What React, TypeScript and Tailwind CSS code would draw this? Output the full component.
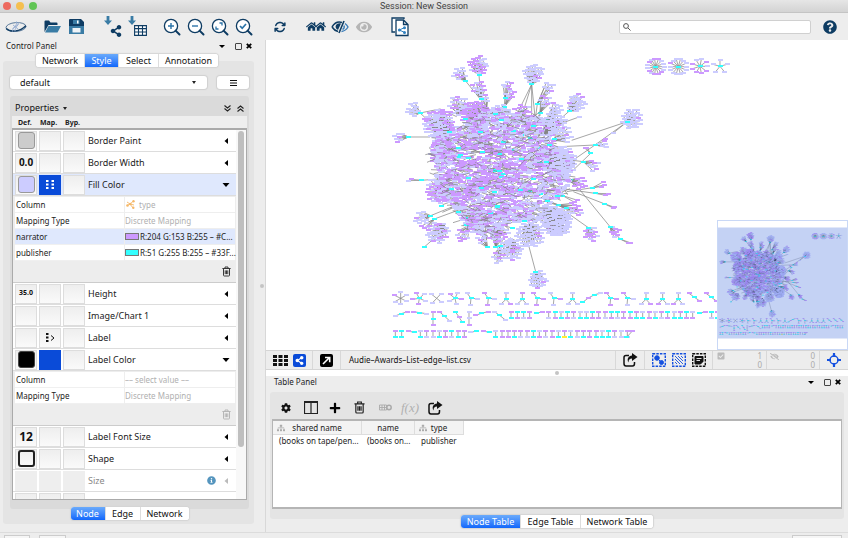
import { Fragment, type ReactNode } from "react";
import {
  FaShareAlt, FaQuestionCircle, FaHome, FaEye, FaCog, FaPlus,
  FaSitemap, FaInfoCircle, FaCheckSquare, FaEyeSlash,
} from "react-icons/fa";
import { FaArrowsRotate } from "react-icons/fa6";

/* ---------- network drawing ---------- */

type Kind = "L" | "P" | "C" | "Y";
type Layer = { edges: string; L: string; P: string; C: string; Y: string };

const COLORS: Record<Kind, string> = { L: "#ccccff", P: "#cc99ff", C: "#33ffff", Y: "#ffee33" };

function buildNetwork(): Layer[] {
  let seed = 20177;
  const rnd = () => {
    seed = (seed + 0x6d2b79f5) | 0;
    let t = Math.imul(seed ^ (seed >>> 15), 1 | seed);
    t = (t + Math.imul(t ^ (t >>> 7), 61 | t)) ^ t;
    return ((t ^ (t >>> 14)) >>> 0) / 4294967296;
  };
  const layers: Layer[] = [];
  let cur: Layer;
  const newLayer = () => {
    cur = { edges: "", L: "", P: "", C: "", Y: "" };
    layers.push(cur);
  };
  const snap = (v: number) => Math.round(v / 3) * 3;
  const node = (x: number, y: number, k: Kind) => {
    cur[k] += `M${snap(x - 7)} ${snap(y - 3)}h15v6h-15z`;
  };
  const edge = (x1: number, y1: number, x2: number, y2: number) => {
    cur.edges += `M${Math.round(x1)} ${Math.round(y1)}L${Math.round(x2)} ${Math.round(y2)}`;
  };
  const pick = (p: number): Kind => (rnd() < p ? "P" : "L");
  // bubble of leaves around a hub
  const disc = (cx: number, cy: number, r: number, p: number, hx = cx, hy = cy, density = 44) => {
    const n = Math.max(2, Math.round((r * r) / density));
    for (let i = 0; i < n; i++) {
      const a = i * 2.39996;
      const d = r * Math.sqrt((i + 0.5) / n);
      const x = cx + Math.cos(a) * d;
      const y = cy + Math.sin(a) * d;
      edge(hx, hy, x, y);
      node(x, y, pick(p));
    }
  };
  const fan = (hx: number, hy: number, cx: number, cy: number, r: number, p: number, stems: number[][] = []) => {
    disc(cx, cy, r, p, hx, hy, r > 24 ? 30 : 36);
    stems.forEach(([x, y]) => edge(hx, hy, x, y));
    node(hx, hy, "C");
  };

  newLayer();
  fan(297, 90, 295, 60, 28, 0.55, [[303, 160]]);
  fan(256, 107, 238, 86, 20, 0.1, [[303, 165]]);
  fan(303, 162, 297, 130, 22, 0.3, [[320, 220]]);
  fan(320, 188, 316, 160, 14, 0.3, [[330, 230]]);
  fan(375, 160, 382, 122, 15, 0.3, [[375, 200]]);
  fan(373, 186, 390, 148, 16, 0.8, [[370, 230]]);
  fan(455, 118, 460, 85, 29, 0.12, [[412, 205], [428, 205], [455, 240], [465, 215]]);
  fan(472, 176, 507, 128, 17, 0.2, [[465, 230]]);
  fan(480, 204, 495, 168, 18, 0.5, [[460, 250]]);
  fan(506, 222, 528, 190, 18, 0.2, [[490, 260]]);
  fan(568, 198, 590, 174, 27, 0.3, [[515, 245]]);
  fan(742, 230, 756, 222, 31, 0.04, [[575, 286], [645, 300], [700, 264]]);
  node(700, 264, "L");
  node(675, 282, "P");
  fan(120, 204, 98, 193, 21, 0.05, [[160, 240], [180, 192]]);
  edge(180, 192, 230, 215);
  fan(86, 276, 55, 276, 16, 0.7, [[150, 276]]);
  fan(124, 406, 90, 403, 7, 0.3, [[175, 402]]);
  fan(152, 512, 122, 520, 20, 0.1, [[230, 480]]);
  fan(163, 522, 138, 545, 14, 0.5, [[250, 490]]);
  fan(322, 607, 305, 580, 16, 0.3, [[315, 540]]);
  fan(347, 607, 350, 575, 18, 0.5, [[350, 540]]);
  fan(362, 602, 354, 638, 17, 0.4, [[375, 560]]);
  fan(467, 680, 474, 705, 27, 0.03, [[443, 590]]);
  fan(645, 300, 672, 298, 14, 0.2, [[540, 305], [580, 345]]);
  fan(632, 325, 618, 308, 4, 0.8, [[575, 380]]);
  fan(610, 350, 642, 362, 17, 0.3, [[578, 346]]);
  fan(638, 428, 668, 420, 10, 0.8, [[560, 440]]);
  fan(645, 445, 682, 446, 8, 0.8, [[540, 430]]);
  fan(672, 476, 702, 487, 3, 0.9, [[580, 440]]);
  fan(690, 545, 706, 562, 17, 0.7, [[600, 435]]);
  fan(720, 582, 748, 593, 3, 0.9, [[690, 545]]);
  fan(625, 548, 634, 568, 22, 0.6, [[550, 495]]);
  fan(572, 404, 600, 416, 20, 0.7, [[540, 380]]);
  fan(548, 452, 588, 466, 9, 0.5, [[500, 440]]);
  fan(534, 480, 582, 490, 18, 0.6, [[490, 460]]);
  fan(558, 490, 600, 504, 10, 0.5, [[500, 470]]);
  edge(133, 606, 165, 578);
  node(133, 606, "C");
  edge(530, 240, 600, 215);
  node(598, 216, "L");
  disc(245, 572, 20, 0.6, 270, 540);
  disc(172, 562, 33, 0.25, 192, 540, 30);
  disc(392, 614, 34, 0.15, 392, 580, 30);
  disc(450, 568, 42, 0.05, 450, 540, 34);
  disc(530, 530, 44, 0.03, 505, 500, 26);

  // dense core: wobbling outline, more narrators towards the middle
  for (let l = 0; l < 8; l++) {
    newLayer();
    if (l === 0) {
      disc(176, 238, 46, 0.4, 205, 260, 26);
      disc(236, 182, 32, 0.25, 240, 210);
      disc(190, 322, 42, 0.4, 190, 322, 30);
      disc(180, 435, 42, 0.45, 180, 435, 30);
      disc(540, 350, 48, 0.15, 500, 350, 26);
      disc(522, 236, 36, 0.1, 495, 265, 26);
      disc(555, 270, 24, 0.1, 520, 285);
      disc(425, 205, 30, 0.7);
      disc(360, 200, 24, 0.3);
      disc(285, 210, 42, 0.75, 285, 210, 26);
      disc(290, 530, 42, 0.4);
      disc(355, 560, 32, 0.6);
    }
    for (let i = 0; i < 260; i++) {
      const a = rnd() * Math.PI * 2;
      const t = Math.sqrt(rnd());
      const wob = 1 + 0.06 * Math.sin(a * 7 + 1) + 0.05 * Math.sin(a * 4);
      const x = 360 + Math.cos(a) * t * 200 * wob;
      const y = 374 + Math.sin(a) * t * 180 * wob;
      if (i % 2 === 0) {
        edge(x, y, x + (rnd() - 0.5) * 80, y + (rnd() - 0.5) * 40);
      }
      const q = rnd();
      node(x, y, q < 0.012 ? "C" : pick(0.7 - 0.4 * t * t + (x < 330 ? 0.03 : -0.06)));
    }
  }

  // bubbles and publishers that lie over the core
  newLayer();
  disc(522, 236, 26, 0.08, 495, 265, 24);
  disc(530, 532, 40, 0.03, 505, 500, 26);
  disc(545, 352, 36, 0.1, 505, 352, 26);
  disc(176, 238, 36, 0.3, 205, 260, 26);
  [[257, 222], [300, 261], [240, 330], [308, 321], [265, 340], [208, 262], [215, 432], [234, 502], [185, 484],
   [352, 482], [352, 487], [358, 377], [425, 341], [498, 352], [522, 282], [508, 300], [460, 243], [433, 528],
   [398, 548], [365, 225], [346, 206], [502, 468], [460, 402], [305, 430], [420, 434]].forEach(([x, y]) => node(x, y, "C"));

  // small stars at the top right
  const star = (x: number, y: number, r: number, n: number, p: number, hub: boolean, rot = 0) => {
    for (let i = 0; i < n; i++) {
      const a = rot + (i / n) * Math.PI * 2;
      const nx = x + Math.cos(a) * r;
      const ny = y + Math.sin(a) * r * 0.92;
      edge(x, y, nx, ny);
      node(nx, ny, pick(p));
    }
    if (hub) node(x, y, "C");
  };
  star(827, 65, 25, 15, 0.2, true);
  star(895, 65, 25, 14, 0.15, true);
  star(960, 64, 23, 9, 0.6, true);
  star(1020, 64, 22, 5, 0, true, -1.57);

  // loose components under the core
  const y1 = 760;
  star(62, y1, 20, 6, 0.15, false, 0.5);
  star(118, y1, 20, 5, 0.3, true, -0.8);
  star(170, y1, 20, 4, 0.2, false, 0.7);
  star(225, y1, 20, 5, 0.2, true, 0.1);
  [273, 325, 472, 522, 692, 743].forEach((x) => {
    [[-12, -16], [18, 1], [-2, 19]].forEach(([dx, dy]) => {
      edge(x, y1, x + dx, y1 + dy);
      node(x + dx, y1 + dy, pick(0.4));
    });
    node(x, y1, "C");
  });
  [378, 427, 578, 798, 848, 895].forEach((x) => {
    [[0, -17], [-14, 16], [13, 17]].forEach(([dx, dy]) => {
      edge(x, y1 + 3, x + dx, y1 + dy);
      node(x + dx, y1 + dy, pick(0.4));
    });
    node(x, y1 + 3, "C");
  });
  const chain = (pts: [number, number, Kind][]) => {
    pts.forEach(([x, y], i) => {
      if (i) edge(pts[i - 1][0], pts[i - 1][1] + 705, x, y + 705);
    });
    pts.forEach(([x, y, k]) => node(x, y + 705, k));
  };
  chain([[608, 67, "C"], [625, 54, "P"], [644, 44, "C"], [661, 40, "L"]]);
  chain([[927, 40, "P"], [942, 51, "C"], [958, 62, "P"]]);
  chain([[978, 40, "P"], [993, 51, "C"], [1008, 62, "P"]]);
  chain([[1028, 40, "P"], [1043, 51, "C"], [1058, 62, "P"]]);
  chain([[45, 108, "L"], [64, 101, "C"], [83, 95, "P"]]);
  chain([[100, 95, "P"], [119, 98, "C"], [139, 101, "L"]]);
  chain([[159, 95, "P"], [159, 116, "C"], [159, 135, "P"]]);
  chain([[178, 95, "P"], [193, 108, "C"], [208, 122, "L"]]);
  chain([[226, 95, "C"], [237, 111, "P"], [247, 127, "C"]]);
  chain([[267, 95, "L"], [267, 115, "L"], [267, 135, "P"]]);
  chain([[287, 106, "P"], [304, 100, "C"], [324, 95, "P"]]);
  chain([[343, 95, "L"], [359, 106, "C"], [375, 119, "L"]]);
  const other = (): Kind => (rnd() < 0.62 ? "C" : rnd() < 0.5 ? "P" : "L");
  for (let i = 0; i < 36; i++) {
    const x = 393 + i * 18.8;
    if (i === 4 || i === 30) {
      chain([[x + 2, 100, "C"], [x + 18, 95, "P"]]);
    } else if (i !== 5 && i !== 31) {
      const cyanTop = rnd() < 0.3;
      chain([[x, 95, cyanTop ? "C" : pick(0.5)], [x, 115, cyanTop ? pick(0.5) : other()]]);
    }
  }
  for (let i = 0; i < 38; i++) {
    const x = 46 + i * 18.8;
    if (i === 2 || i === 14) {
      chain([[x, 153, "P"], [x + 18, 157, "C"]]);
    } else if (i === 12) {
      chain([[x, 157, "L"], [x + 18, 153, "C"]]);
    } else if (i !== 3 && i !== 13 && i !== 15) {
      chain([[x, 153, rnd() < 0.12 ? "C" : pick(0.75)], [x, 172, i === 27 ? "Y" : other()]]);
    }
  }
  chain([[740, 172, "C"], [757, 153, "P"]]);
  return layers;
}

const NETWORK = buildNetwork();

function NetworkGraph({ edge }: { edge: string }) {
  return (
    <g transform="translate(380 45) scale(.333333)">
      {NETWORK.map((l, i) => (
        <Fragment key={i}>
          <path d={l.edges} stroke={edge} strokeWidth="2.200" fill="none" />
          <path d={l.L} fill={COLORS.L} />
          <path d={l.P} fill={COLORS.P} />
          <path d={l.C} fill={COLORS.C} />
          <path d={l.Y} fill={COLORS.Y} />
        </Fragment>
      ))}
    </g>
  );
}

/* ---------- icons ---------- */

function LogoIcon() {
  return (
    <svg viewBox="0 0 24 16" className="h-4 w-6" fill="none">
      <ellipse cx="12" cy="8" rx="10" ry="4.400" stroke="#4d6f93" strokeWidth=".9" transform="rotate(-4 12 8)" />
      <path d="M2.200 9.500C6 13.500 16 13 21.800 6.800" stroke="#133f66" strokeWidth="1.500" />
      <path d="M8.500 12.500c-1-3 5-5 4-10M14 3c1.500 3-3.500 5-3 9.500M9 6l5 4M8.500 9.500l6-4" stroke="#94acd0" strokeWidth=".9" />
    </svg>
  );
}

function FolderIcon() {
  return (
    <svg viewBox="0 0 17 13" className="h-[13px] w-[17px]">
      <path d="M.5 12V1.500Q.5.500 1.500.500H5l1.500 2h6q1 0 1 1V5H4.500z" fill="#0e3c63" />
      <path d="M4.500 6H17l-3.500 6.500H1z" fill="#3a7ca5" />
    </svg>
  );
}

function SaveIcon() {
  return (
    <svg viewBox="0 0 15 15" className="size-[15px]">
      <path d="M1 0h11l3 3v11q0 1-1 1H1q-1 0-1-1V1Q0 0 1 0z" fill="#0e3c63" />
      <path d="M0 7h15v7q0 1-1 1H1q-1 0-1-1z" fill="#3a7ca5" />
      <path d="M3.500 9h8v4.500h-8z" fill="#eef3f7" />
      <path d="M4 1h6.500v4H4z" fill="#3a7ca5" />
      <path d="M8 1.500h1.500v3H8z" fill="#fff" />
    </svg>
  );
}

function TableGridIcon() {
  return (
    <svg viewBox="0 0 13 11" className="mt-2 ml-2 h-[11px] w-[13px] shrink-0" fill="#fff" stroke="#0e3c63" strokeWidth="1.100">
      <path d="M.6.600h11.800v9.800H.6z" />
      <path d="M.6 3.600h11.800M.6 7h11.800M4.500.600v9.800M8.500.600v9.800" />
    </svg>
  );
}

function ZoomIcon({ children }: { children: ReactNode }) {
  return (
    <svg viewBox="0 0 18 18" className="size-[18px]" fill="none" stroke="#0e3c63">
      <circle cx="8" cy="8" r="6.600" strokeWidth="1.300" fill="#fff" />
      <path d="M12.600 12.600L16.500 16.500" strokeWidth="2" strokeLinecap="round" />
      {children}
    </svg>
  );
}

function DownArrow() {
  return (
    <svg viewBox="0 0 8 9" className="absolute top-px left-1 h-[9px] w-2" fill="#3a7ca5">
      <path d="M2.600 0h2.800v4.500H8L4 9 0 4.500h2.600z" />
    </svg>
  );
}

function SplitEye() {
  return (
    <svg viewBox="0 0 18 14" className="h-3.5 w-[18px]" fill="none">
      <path d="M1 7C4 2 8 1.500 11 2.500M1 7c2 3 4 4 6 4.500" stroke="#0e3c63" strokeWidth="1.500" />
      <path d="M4.500 7A4 4 0 0 1 10 3.500L7 10A4 4 0 0 1 4.500 7z" fill="#0e3c63" />
      <path d="M13 1L8 13" stroke="#0e3c63" strokeWidth="1.600" />
      <path d="M14 3.500C16 5 17 7 17 7s-2.500 4-6.500 4.500M13 5.500c.6 2-.4 3.500-1.500 4" stroke="#3a7cb8" strokeWidth="1.400" />
    </svg>
  );
}

function CopyNetworkIcon() {
  return (
    <svg viewBox="0 0 18 20" className="h-5 w-[18px]" fill="#fff" stroke="#0e3c63" strokeWidth="1.300">
      <path d="M13 2V1H1v14h3" />
      <path d="M5 3h7.500L17 7.500V18.500H5zM12.500 3v4.500H17" />
      <path d="M13.500 10.500L8.500 13l5 2.500" stroke="#2f80c0" strokeWidth="1" fill="none" />
      <g fill="#2f80c0" stroke="none"><circle cx="8.500" cy="13" r="1.600" /><circle cx="13.500" cy="10.700" r="1.500" /><circle cx="13.500" cy="15.500" r="1.500" /></g>
    </svg>
  );
}

function TrashIcon({ className }: { className: string }) {
  return (
    <svg viewBox="0 0 12 14" className={className} fill="none" stroke="currentColor" strokeWidth="1.300">
      <path d="M.5 3h11M4 3V1h4v2M2 3v9q0 1 1 1h6q1 0 1-1V3M4.300 5.500v5M6 5.500v5M7.700 5.500v5" />
    </svg>
  );
}

function ExportIcon() {
  return (
    <svg viewBox="0 0 15 14" className="h-3.5 w-[15px]" fill="none" stroke="#111" strokeWidth="1.500">
      <path d="M6 2.500H3Q1 2.500 1 4.500v6Q1 13 3 13h6.500q2 0 2-2.500V9" />
      <path d="M9 0l5.500 4L9 8V5.500C6.500 5.500 5.500 7 5.500 9.500 3.500 6 5.500 2.700 9 2.500z" fill="#111" stroke="none" />
    </svg>
  );
}

function GridIcon() {
  return (
    <svg viewBox="0 0 15 11" className="h-[11px] w-[15px]" fill="#111">
      <path d="M0 0h4v3H0zM5.500 0h4v3h-4zM11 0h4v3h-4zM0 4h4v3H0zM5.500 4h4v3h-4zM11 4h4v3h-4zM0 8h4v3H0zM5.500 8h4v3h-4zM11 8h4v3h-4z" />
    </svg>
  );
}

function DashedIcon({ color, children }: { color: string; children: ReactNode }) {
  return (
    <svg viewBox="0 0 14 14" className="size-3.5" fill="none" stroke={color}>
      <path d="M.7.700h12.600v12.600H.7z" strokeWidth="1.400" strokeDasharray="2.500 1.100" />
      {children}
    </svg>
  );
}

function Chevrons({ up }: { up?: boolean }) {
  return (
    <svg viewBox="0 0 7 7" className="size-[7px]" fill="none" stroke="#222" strokeWidth="1.100">
      <path d={up ? "M.5 3.500l3-2.500 3 2.500M.5 6.500l3-2.500 3 2.500" : "M.5.500l3 2.500 3-2.500M.5 3.500l3 2.500 3-2.500"} />
    </svg>
  );
}

/* ---------- shared parts ---------- */

function ToolButton({ label, children }: { label: string; children: ReactNode }) {
  return (
    <button aria-label={label} className="relative flex h-6 w-6 items-center justify-center text-[#0e3c63]">
      {children}
    </button>
  );
}

function PanelTitle({ title }: { title: string }) {
  return (
    <div className="flex h-3 items-center text-[8px] leading-3 text-[#222]">
      <h2 className="flex-1">{title}</h2>
      <button aria-label="Panel menu" className="mr-2.5 border-x-[3px] border-t-[3px] border-x-transparent border-t-black" />
      <button aria-label="Float panel" className="mr-1 size-[7px] rounded-[1px] border border-[#444]" />
      <button aria-label="Close panel">
        <svg viewBox="0 0 6 6" className="size-1.5"><path d="M.8.800l4.400 4.400M5.200.800L.8 5.200" stroke="#000" strokeWidth="1.800" /></svg>
      </button>
    </div>
  );
}

function Tabs({ items, active }: { items: [string, string][]; active: string }) {
  return (
    <div role="tablist" className="flex h-[13px] divide-x divide-[#ddd] overflow-hidden rounded-[3px] bg-white text-[9px] leading-[13px] text-[#111] shadow-[0_0_1px_1px_#d4d4d4]">
      {items.map(([name, width]) => (
        <button
          key={name}
          role="tab"
          aria-selected={name === active}
          className={`${width} text-center whitespace-nowrap ${name === active ? "bg-linear-to-b from-[#6aaafb] to-[#0f66fb] text-white" : "bg-white"}`}
        >
          {name}
        </button>
      ))}
    </div>
  );
}

/* ---------- control panel ---------- */

type Row = {
  name: string;
  def?: ReactNode;
  map?: ReactNode;
  mapOn?: boolean;
  open?: boolean;
  selected?: boolean;
  disabled?: boolean;
};

function Swatch({ className }: { className: string }) {
  return <span className={`size-[17px] rounded-[3px] border ${className}`} />;
}

function Cell({ on, disabled, label, children }: { on?: boolean; disabled?: boolean; label: string; children?: ReactNode }) {
  const look = on ? "border-[#0a4bd8] bg-[#0a4bd8]" : disabled ? "border-[#eee] bg-[#eee]" : "border-[#ddd] bg-linear-to-b from-[#eee] to-[#fafafa]";
  return (
    <button aria-label={label} className={`flex h-5 w-[22px] shrink-0 items-center justify-center border font-bold text-[#111] ${look}`}>
      {children}
    </button>
  );
}

function PropertyRow({ row }: { row: Row }) {
  return (
    <div className={`flex h-[22px] shrink-0 items-center gap-[2px] border-b border-[#ddd] pl-[2px] ${row.selected ? "bg-[#dfe8fd]" : "bg-white"}`}>
      <Cell label={`${row.name} default`} disabled={row.disabled}>{row.def}</Cell>
      <Cell label={`${row.name} mapping`} on={row.mapOn} disabled={row.disabled}>{row.map}</Cell>
      <Cell label={`${row.name} bypass`} disabled={row.disabled} />
      <span className={`flex-1 pl-px text-[9px] ${row.disabled ? "text-[#888]" : "text-[#222]"}`}>{row.name}</span>
      {row.disabled && <FaInfoCircle className="mr-1 size-[9px] text-[#5595be]" />}
      <button aria-label={`Toggle ${row.name}`} className="mr-1.5 flex w-2 justify-center">
        <svg viewBox="0 0 8 6" className="h-1.5 w-2" fill={row.disabled ? "#bbb" : "#000"}>
          <path d={row.open ? "M.5 1h7L4 5z" : "M6 0v6L2.500 3z"} />
        </svg>
      </button>
    </div>
  );
}

type MapLine = { name: string; value: ReactNode; muted?: boolean; selected?: boolean };

function MappingEditor({ lines, trash }: { lines: MapLine[]; trash: string }) {
  return (
    <div className="shrink-0 border-b border-[#ccc] bg-[#ededed] pt-px pl-[2px]">
      <table className="w-[220px] table-fixed border-separate border-spacing-0 text-[8px] leading-[14px] text-[#222]">
        <tbody>
          {lines.map((l) => (
            <tr key={l.name} className={l.selected ? "bg-[#dfe8fd]" : "bg-white"}>
              <th scope="row" className="h-4 w-[109px] border-b border-[#f0f0f0] p-0 pl-px text-left font-normal">{l.name}</th>
              <td className={`h-4 border-b border-l border-[#eee] p-0 whitespace-nowrap ${l.muted ? "text-[#b0b0b0]" : ""}`}>{l.value}</td>
            </tr>
          ))}
        </tbody>
      </table>
      <div className="flex h-[21px] items-center justify-end pr-[5px]">
        <button aria-label="Remove mapping" className={trash}><TrashIcon className="h-[11px] w-[9px]" /></button>
      </div>
    </div>
  );
}

function ColorValue({ swatch, text }: { swatch: string; text: string }) {
  return (
    <span className="flex items-center gap-px">
      <span className={`h-[7px] w-3.5 shrink-0 border border-[#777] ${swatch}`} />
      {text}
    </span>
  );
}

const fillLines: MapLine[] = [
  {
    name: "Column",
    muted: true,
    value: (
      <span className="flex items-center gap-1 pl-px">
        <svg viewBox="0 0 9 9" className="size-[9px]" fill="none" stroke="#f5b869" strokeWidth=".9">
          <path d="M1 5.500L4 4 7.500 1M4 4l4 1M4 4l3 4M1 2l3 2" />
          <g fill="#f5b869" stroke="none"><circle cx="1.500" cy="5.500" r="1.300" /><circle cx="4.300" cy="4" r="1.300" /><circle cx="7.500" cy="1.300" r="1.200" /><circle cx="7.300" cy="7.700" r="1.200" /></g>
        </svg>
        type
      </span>
    ),
  },
  { name: "Mapping Type", muted: true, value: "Discrete Mapping" },
  { name: "narrator", selected: true, value: <ColorValue swatch="bg-[#cc99ff]" text="R:204 G:153 B:255 – #C..." /> },
  { name: "publisher", value: <ColorValue swatch="bg-[#33ffff]" text="R:51 G:255 B:255 – #33F..." /> },
];

const labelLines: MapLine[] = [
  { name: "Column", muted: true, value: "–– select value ––" },
  { name: "Mapping Type", muted: true, value: "Discrete Mapping" },
];

const dots = (
  <svg viewBox="0 0 8 9" className="h-[9px] w-2" fill="#fff">
    <path d="M0 0h2.500v2H0zM0 3.500h2.500v2H0zM0 7h2.500v2H0zM5.500 0H8v2H5.500zM5.500 3.500H8v2H5.500zM5.500 7H8v2H5.500z" />
  </svg>
);

const passthrough = (
  <svg viewBox="0 0 9 9" className="size-[9px]" fill="#111">
    <path d="M0 0h2.500v2H0zM0 3.500h2.500v2H0zM0 7h2.500v2H0z" />
    <path d="M5 2.500L8 5 5 7.500" fill="none" stroke="#111" />
  </svg>
);

function ControlPanel() {
  return (
    <aside className="flex w-[254px] shrink-0 flex-col pb-2">
      <div className="pr-0.5 pl-1.5"><PanelTitle title="Control Panel" /></div>
      <div className="relative mt-[2px] flex justify-center pb-2">
        <Tabs active="Style" items={[["Network", "w-[49px]"], ["Style", "w-[34px]"], ["Select", "w-10"], ["Annotation", "w-[59px]"]]} />
      </div>
      <div className="-mt-[14px] ml-[3px] flex min-h-0 flex-1 flex-col rounded-[3px] bg-[#e4e4e4] pt-[15px] pr-[5px] pb-1 pl-[7px]">
        <div className="flex gap-2.5">
          <div className="relative flex-1">
            <select aria-label="Current style" className="block h-[13px] w-full appearance-none rounded-[3px] bg-white pl-2.5 text-[9px] leading-[13px] text-[#111] shadow-[0_0_1px_1px_#d0d0d0]">
              <option>default</option>
            </select>
            <span className="pointer-events-none absolute top-[5px] right-[11px] border-x-2 border-t-[3px] border-x-transparent border-t-[#222]" />
          </div>
          <button aria-label="Options" className="flex h-[13px] w-8 items-center justify-center rounded-[3px] bg-white shadow-[0_0_1px_1px_#d0d0d0]">
            <svg viewBox="0 0 7 6" className="h-1.5 w-[7px]" stroke="#111"><path d="M0 .5h7M0 3h7M0 5.500h7" /></svg>
          </button>
        </div>
        <div className="mt-[7px] flex min-h-0 flex-1 flex-col rounded-[3px] bg-[#dadada] px-[2px] pb-[9px]">
          <div className="flex h-5 shrink-0 items-center gap-1.5 pt-1 pl-[3px] text-[9px] text-[#111]">
            <button className="flex flex-1 items-center gap-1">
              Properties
              <span className="border-x-2 border-t-[3px] border-x-transparent border-t-[#222]" />
            </button>
            <button aria-label="Expand all"><Chevrons /></button>
            <button aria-label="Collapse all" className="pr-[3px]"><Chevrons up /></button>
          </div>
          <div className="flex h-3 shrink-0 gap-[2px] bg-[#eee] pl-[3px] text-[7px] leading-[14px] font-bold text-[#222]">
            <span className="w-[22px] pl-[3px]">Def.</span>
            <span className="w-[22px] pl-px">Map.</span>
            <span className="w-[22px] pl-[2px]">Byp.</span>
          </div>
          <div className="flex min-h-0 flex-1 overflow-hidden border border-t-2 border-[#aaa] bg-[#f4f4f4]">
            <div className="flex min-w-0 flex-1 flex-col overflow-hidden">
              <PropertyRow row={{ name: "Border Paint", def: <Swatch className="border-[#999] bg-[#ccc]" /> }} />
              <PropertyRow row={{ name: "Border Width", def: <span className="text-[10px]">0.0</span> }} />
              <PropertyRow row={{ name: "Fill Color", selected: true, open: true, mapOn: true, map: dots, def: <Swatch className="border-[#999] bg-[#ccccff]" /> }} />
              <MappingEditor lines={fillLines} trash="text-[#333]" />
              <PropertyRow row={{ name: "Height", def: <span className="text-[7px]">35.0</span> }} />
              <PropertyRow row={{ name: "Image/Chart 1" }} />
              <PropertyRow row={{ name: "Label", map: passthrough }} />
              <PropertyRow row={{ name: "Label Color", open: true, mapOn: true, def: <Swatch className="border-[#444] bg-black" /> }} />
              <MappingEditor lines={labelLines} trash="text-[#b5b5b5]" />
              <PropertyRow row={{ name: "Label Font Size", def: <span className="text-[12px] leading-4">12</span> }} />
              <PropertyRow row={{ name: "Shape", def: <span className="size-[17px] rounded-[3px] border-2 border-[#222]" /> }} />
              <PropertyRow row={{ name: "Size", disabled: true }} />
              <PropertyRow row={{ name: "Transparency", def: <span className="text-[8px]">255</span> }} />
            </div>
            <div className="w-2.5 shrink-0 bg-[#f8f8f8] px-[2px] pt-px">
              <div className="h-[86%] rounded-full bg-[#bfbfbf]" />
            </div>
          </div>
        </div>
        <div className="relative -mt-[2px] flex justify-center">
          <Tabs active="Node" items={[["Node", "w-[35px]"], ["Edge", "w-[35px]"], ["Network", "w-12"]]} />
        </div>
      </div>
    </aside>
  );
}

/* ---------- network view ---------- */

function Counts({ a, b, icon }: { a: string; b: string; icon: ReactNode }) {
  return (
    <div className="flex w-[46px] justify-between pr-px text-[8px] leading-[9px] text-[#aaa]">
      {icon}
      <span className="text-right">{a}<br />{b}</span>
    </div>
  );
}

function NetworkView() {
  return (
    <section aria-label="Network view" className="relative min-h-0 flex-1 overflow-hidden bg-white">
      <svg viewBox="266 40 582 310" className="h-full w-full" preserveAspectRatio="xMidYMid slice">
        <NetworkGraph edge="#858585" />
      </svg>
      <div className="absolute right-0 bottom-0 h-[130px] w-[131px] border border-[#c9d8f6] bg-white">
        <svg viewBox="389 25 354 351" className="h-full w-full">
          <NetworkGraph edge="#555" />
          <path d="M380 43h380v304H380z" fill="#124dd2" fillOpacity=".25" />
        </svg>
      </div>
    </section>
  );
}

function NetworkBar() {
  const div = <span className="h-full w-px bg-[#d8d8d8]" />;
  return (
    <div className="flex h-5 shrink-0 items-center border-t border-b border-[#d5d5d5] bg-[#ededed]">
      <button aria-label="Grid view" className="ml-[7px]"><GridIcon /></button>
      <button aria-label="Show network" className="mr-1.5 ml-[5px] flex size-[13px] items-center justify-center rounded-[2px] bg-[#0a4bd8] text-white">
        <FaShareAlt className="size-[9px]" />
      </button>
      {div}
      <button aria-label="Detach view" className="mx-[7px] flex size-[13px] items-center justify-center rounded-[2px] bg-black">
        <svg viewBox="0 0 9 9" className="size-[9px]" fill="none" stroke="#fff" strokeWidth="1.600"><path d="M1 8l6-6M3 1.500h4.700v4.700" /></svg>
      </button>
      {div}
      <span className="flex-1 pl-2 text-[8px] text-[#111]">Audie–Awards–List–edge–list.csv</span>
      {div}
      <button aria-label="Export network" className="mr-1.5 ml-[7px]"><ExportIcon /></button>
      {div}
      <div className="mr-1.5 ml-[7px] flex gap-1.5">
        <button aria-label="Show nodes">
          <DashedIcon color="#1450e0"><circle cx="5" cy="5" r="2.300" fill="#1450e0" /><circle cx="9.500" cy="9.500" r="2" fill="#1450e0" /><path d="M5 5l4 4" /></DashedIcon>
        </button>
        <button aria-label="Show edges">
          <DashedIcon color="#1450e0"><path d="M3 3l8 8M6 3l5 5M3 6l5 5M9 3l2 2M3 9l2 2" strokeWidth=".9" /></DashedIcon>
        </button>
        <button aria-label="Show annotations">
          <DashedIcon color="#111"><path d="M3 3.500h8v5L8.500 11H3z" fill="#111" /><path d="M4.500 5.500h5M4.500 7.500h3.500" stroke="#ddd" /></DashedIcon>
        </button>
      </div>
      {div}
      <div className="flex h-full items-center gap-[3px] pl-1">
        <Counts a="1" b="0" icon={<FaCheckSquare className="mt-px size-2 text-[#bbb]" />} />
        {div}
        <Counts a="0" b="0" icon={<FaEyeSlash className="mt-px size-[9px] text-[#bbb]" />} />
        {div}
      </div>
      <button aria-label="Bird's eye view" className="mr-[7px] ml-[7px]">
        <svg viewBox="0 0 14 14" className="size-3.5" fill="none" stroke="#1450e0" strokeWidth="1.500">
          <circle cx="7" cy="7" r="4" />
          <path d="M7 0v4M7 10v4M0 7h4M10 7h4" strokeWidth="2.200" />
        </svg>
      </button>
    </div>
  );
}

/* ---------- table panel ---------- */

function TablePanel() {
  const sitemap = <FaSitemap className="absolute top-[3px] left-1 size-2 text-[#aaa]" />;
  return (
    <section className="flex h-[156px] shrink-0 flex-col bg-[#ededed]">
      <div className="pr-[7px] pl-2"><PanelTitle title="Table Panel" /></div>
      <div className="mx-1 mt-1 flex h-[127px] shrink-0 flex-col rounded-[3px] bg-[#e4e4e4] px-[2px]">
        <div className="flex h-[27px] shrink-0 items-center pt-1 pl-[9px]">
          <button aria-label="Settings" className="w-[18px]"><FaCog className="size-2.5 text-[#111]" /></button>
          <button aria-label="Columns" className="ml-[5px] w-[25px]">
            <svg viewBox="0 0 14 13" className="h-[13px] w-3.5" fill="none" stroke="#222"><path d="M.5.500h13v12H.5zM7 1v12" strokeWidth="1.200" /><path d="M0 1h14" strokeWidth="2" /></svg>
          </button>
          <button aria-label="Add column" className="w-6"><FaPlus className="size-3 text-black" /></button>
          <button aria-label="Delete column" className="ml-px w-[25px] text-[#222]"><TrashIcon className="h-[13px] w-[11px]" /></button>
          <button aria-label="Delete table" className="w-[22px]">
            <svg viewBox="0 0 13 7" className="h-[7px] w-[13px]" fill="none" stroke="#aaa"><path d="M.5 1h7v5h-7zM.5 3.500h7M3 1v5M5.500 1v5" strokeWidth=".9" /><circle cx="10" cy="3.500" r="2.200" strokeWidth="1.500" /></svg>
          </button>
          <button aria-label="Function builder" className="w-[27px] text-left font-['Liberation_Serif',serif] text-[13px] leading-3 text-[#b0b0b0] italic">f(x)</button>
          <button aria-label="Export table"><ExportIcon /></button>
        </div>
        <div className="flex-1 border-t-2 border-r border-b-2 border-l border-[#b5b5b5] bg-white">
          <table className="table-fixed border-separate border-spacing-0 text-[8px] text-[#222]">
            <thead>
              <tr className="bg-[#f3f3f3] leading-[13px]">
                <th className="relative w-[89px] border-r border-b border-[#ddd] p-0 font-normal">{sitemap}shared name</th>
                <th className="relative w-[53px] border-r border-b border-[#ddd] p-0 font-normal">name</th>
                <th className="relative w-[49px] border-r border-b border-[#ddd] p-0 font-normal">{sitemap}type</th>
              </tr>
            </thead>
            <tbody>
              <tr className="leading-[11px] whitespace-nowrap">
                <td className="p-0 pl-1.5">(books on tape/pen...</td>
                <td className="p-0 pl-[5px]">(books on...</td>
                <td className="p-0 pl-1.5">publisher</td>
              </tr>
            </tbody>
          </table>
        </div>
        <div className="h-2.5 shrink-0" />
      </div>
      <div className="relative -mt-1 flex justify-center">
        <Tabs active="Node Table" items={[["Node Table", "w-[60px]"], ["Edge Table", "w-[60px]"], ["Network Table", "w-[72px]"]]} />
      </div>
    </section>
  );
}

export default function App() {
  return (
    <div className="flex h-screen flex-col overflow-hidden bg-[#ededed] font-['Noto_Sans',sans-serif]">
      <header className="relative flex h-[13px] shrink-0 items-center gap-[5px] border-b border-[#c4c4c4] bg-linear-to-b from-[#e6e6e6] to-[#d3d3d3] pb-px pl-[3px]">
        <button aria-label="Close" className="size-2 rounded-full bg-[#ed6a5f]" />
        <button aria-label="Minimize" className="size-2 rounded-full bg-[#f5bf4f]" />
        <button aria-label="Maximize" className="size-2 rounded-full bg-[#61c555]" />
        <h1 className="absolute inset-x-0 text-center font-['Roboto',sans-serif] text-[9px] leading-3 text-[#444]">Session: New Session</h1>
      </header>
      <nav aria-label="Toolbar" className="flex h-[27px] shrink-0 items-center gap-3 pr-[11px] pl-1">
        <ToolButton label="Cytoscape"><LogoIcon /></ToolButton>
        <div className="flex">
          <ToolButton label="Open session"><FolderIcon /></ToolButton>
          <ToolButton label="Save session"><SaveIcon /></ToolButton>
        </div>
        <div className="flex">
          <ToolButton label="Import network"><DownArrow /><FaShareAlt className="mt-2 ml-2 size-3 shrink-0" /></ToolButton>
          <ToolButton label="Import table"><DownArrow /><TableGridIcon /></ToolButton>
        </div>
        <div className="flex">
          <ToolButton label="Zoom in"><ZoomIcon><path d="M8 5v6M5 8h6" stroke="#2b73a8" strokeWidth="1.400" /></ZoomIcon></ToolButton>
          <ToolButton label="Zoom out"><ZoomIcon><path d="M5 8h6" stroke="#2b73a8" strokeWidth="1.400" /></ZoomIcon></ToolButton>
          <ToolButton label="Fit content"><ZoomIcon><path d="M8.500 5h2.500v2.500M7.500 11H5V8.500" stroke="#2b73a8" strokeWidth="1.300" /></ZoomIcon></ToolButton>
          <ToolButton label="Fit selected"><ZoomIcon><path d="M5 8l2.200 2.200L11 6" stroke="#2b73a8" strokeWidth="1.700" /></ZoomIcon></ToolButton>
        </div>
        <ToolButton label="Apply layout"><FaArrowsRotate className="size-3" /></ToolButton>
        <div className="flex">
          <ToolButton label="First neighbors"><FaHome className="-mr-0.5 size-[11px] shrink-0" /><FaHome className="size-[11px] shrink-0" /></ToolButton>
          <ToolButton label="Hide selected"><SplitEye /></ToolButton>
          <ToolButton label="Show all"><FaEye className="size-4 text-[#b5b5b5]" /></ToolButton>
        </div>
        <ToolButton label="New network from selection"><CopyNetworkIcon /></ToolButton>
        <div className="relative ml-auto w-[192px]">
          <svg viewBox="0 0 8 8" className="absolute top-[3px] left-1 size-2" fill="none" stroke="#555"><circle cx="3" cy="3" r="2.400" /><path d="M5 5l2.500 2.500" /></svg>
          <input type="search" aria-label="Search" className="block h-3.5 w-full rounded-[2px] border border-[#d0d0d0] bg-white pl-4 text-[9px]" />
        </div>
        <button aria-label="Help"><FaQuestionCircle className="size-3.5 text-[#0e3c63]" /></button>
      </nav>
      <main className="flex min-h-0 flex-1">
        <ControlPanel />
        <div className="flex w-3 shrink-0 items-center justify-end border-r border-[#d8d8d8] pr-px">
          <span className="size-1 rounded-full bg-[#c4c4c4]" />
        </div>
        <div className="flex min-w-0 flex-1 flex-col">
          <NetworkView />
          <NetworkBar />
          <div className="flex h-1.5 shrink-0 items-center justify-center bg-white"><span className="size-1 rounded-full bg-[#c4c4c4]" /></div>
          <TablePanel />
        </div>
      </main>
      <footer className="flex h-1.5 shrink-0 gap-[9px] overflow-hidden border-t border-[#dcdcdc] pt-[2px] pr-1.5 pl-1">
        <button aria-label="Jobs" className="h-3 w-[26px] border border-[#ccc] bg-[#f6f6f6]" />
        <button aria-label="Tasks" className="h-3 w-[27px] border border-[#ccc] bg-[#f6f6f6]" />
        <button aria-label="Memory" className="ml-auto h-3 w-[50px] border border-[#ccc] bg-[#f6f6f6]" />
      </footer>
    </div>
  );
}
